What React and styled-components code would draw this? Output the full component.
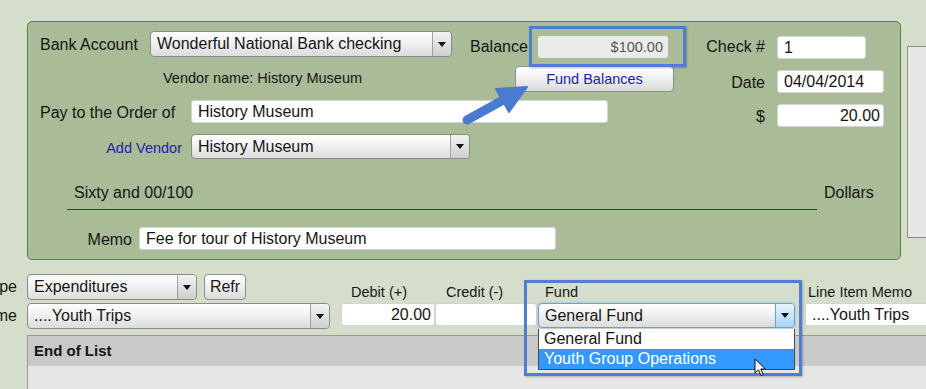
import React from 'react';
import styled, { createGlobalStyle } from 'styled-components';

const GlobalStyle = createGlobalStyle`
  html, body {
    margin: 0;
    padding: 0;
  }
  body {
    background: #d5decb;
    font-family: "Liberation Sans", Arial, sans-serif;
    color: #151515;
    overflow: hidden;
  }
`;

const Page = styled.div`
  width: 926px;
  height: 389px;
  overflow: hidden;
  box-sizing: border-box;
  padding-top: 21px;
`;

const TopSection = styled.div`
  display: flex;
  align-items: flex-start;
  margin-left: 27px;
`;

const Panel = styled.div`
  position: relative;
  flex-shrink: 0;
  box-sizing: border-box;
  width: 874px;
  height: 239px;
  padding: 9px 16px 0 12px;
  background: #a9bb97;
  border: 1px solid #5e8238;
  border-radius: 5px;
`;

const SideBox = styled.div`
  flex-shrink: 0;
  box-sizing: border-box;
  width: 60px;
  height: 192px;
  margin: 25px 0 0 6px;
  background: #e7e7e7;
  border: 1px solid #8c8c8c;
`;

const Row = styled.div`
  display: flex;
  align-items: flex-start;
  height: ${p => p.$h}px;
`;

const Label = styled.div`
  flex-shrink: 0;
  box-sizing: border-box;
  width: ${p => p.$w}px;
  margin-top: ${p => p.$top || 0}px;
  margin-left: ${p => p.$ml || 0}px;
  padding-right: ${p => p.$pr || 0}px;
  font-size: ${p => p.$size || 16}px;
  line-height: ${p => p.$lh || 26}px;
  text-align: ${p => p.$align || 'left'};
  color: ${p => (p.$link ? '#2323a6' : 'inherit')};
  white-space: nowrap;
`;

const Field = styled.div`
  flex-shrink: 0;
  box-sizing: border-box;
  width: ${p => p.$w}px;
  height: ${p => p.$h || 23}px;
  margin-top: ${p => p.$top || 0}px;
  padding: 0 ${p => p.$pr || 6}px 0 6px;
  background: #fff;
  border: 1px solid #d4d4d4;
  border-radius: 3px;
  font-size: 16px;
  line-height: ${p => (p.$h || 23) - 2}px;
  text-align: ${p => p.$align || 'left'};
  white-space: nowrap;
  overflow: hidden;
`;

const Highlight = styled.div`
  position: relative;
  flex-shrink: 0;
  margin-top: ${p => p.$top || 0}px;

  &::after {
    content: '';
    position: absolute;
    top: -10px;
    right: -18px;
    bottom: -9px;
    left: -9px;
    border: 3px solid #4f7ed0;
    box-shadow: 1px 1px 2px rgba(0, 0, 0, 0.25);
    pointer-events: none;
  }
`;

const BalanceField = styled.div`
  box-sizing: border-box;
  width: 130px;
  height: 22px;
  padding-right: 5px;
  background: #ebebeb;
  border-radius: 3px;
  font-size: 14.5px;
  line-height: 22px;
  text-align: right;
  color: #555;
`;

const Button = styled.div`
  flex-shrink: 0;
  box-sizing: border-box;
  width: ${p => p.$w}px;
  height: 26px;
  border: 1px solid #8d8d8d;
  border-radius: 4px;
  background: linear-gradient(#ffffff, #f1f1f1 45%, #dadada);
  font-size: ${p => p.$size || 16}px;
  line-height: 24px;
  text-align: center;
  color: ${p => (p.$link ? '#2323a6' : '#1c1c1c')};
  white-space: nowrap;
`;

const SelectBox = styled.div`
  flex-shrink: 0;
  display: flex;
  box-sizing: border-box;
  width: ${p => p.$w}px;
  height: ${p => p.$h}px;
  border: 1px solid ${p => (p.$focus ? '#6b9ede' : '#8b8b8b')};
  border-radius: 4px;
  background: linear-gradient(#ffffff, #f3f3f3 40%, #dcdcdc);
  box-shadow: ${p => (p.$focus ? '0 0 3px #8ab8f0' : 'none')};
  overflow: hidden;
`;

const SelectText = styled.span`
  flex: 1;
  padding-left: 6px;
  font-size: 16px;
  line-height: ${p => p.$h - 2}px;
  white-space: nowrap;
  overflow: hidden;
`;

const SelectArrow = styled.span`
  flex-shrink: 0;
  display: flex;
  align-items: center;
  justify-content: center;
  width: 18px;
  border-left: 1px solid ${p => (p.$focus ? '#6b9ede' : '#a0a0a0')};
  border-radius: 0 3px 3px 0;
  background: ${p =>
    p.$focus
      ? 'linear-gradient(#e8f5fd, #a8d3f3)'
      : 'linear-gradient(#f3f3f3, #cfcfcf)'};

  &::after {
    content: '';
    border-left: 4px solid transparent;
    border-right: 4px solid transparent;
    border-top: 5px solid #111;
  }
`;

const Select = ({ w, h = 26, focus, children }) => (
  <SelectBox $w={w} $h={h} $focus={focus}>
    <SelectText $h={h}>{children}</SelectText>
    <SelectArrow $focus={focus} />
  </SelectBox>
);

const AmountRow = styled.div`
  display: flex;
  align-items: flex-end;
  margin-top: 25px;
`;

const AmountLine = styled.div`
  box-sizing: border-box;
  width: 750px;
  margin-left: 27px;
  padding: 0 0 7px 7px;
  border-bottom: 1px solid #1f3d70;
  font-size: 16px;
  line-height: 18px;
`;

const Dollars = styled.div`
  margin-left: 7px;
  padding-bottom: 8px;
  font-size: 16px;
  line-height: 18px;
`;

const MemoRow = styled(Row)`
  margin-top: 17px;
`;

const Arrow = styled.svg`
  position: absolute;
  left: 402px;
  top: 38px;
  pointer-events: none;
`;

const Lower = styled.div`
  display: flex;
  align-items: flex-start;
  margin-top: 14px;
`;

const LeftBlock = styled.div`
  flex-shrink: 0;
  display: grid;
  grid-template-columns: 17px 303px;
  column-gap: 10px;
  row-gap: 3px;
`;

const RowLabel = styled.div`
  display: flex;
  justify-content: flex-end;
  overflow: hidden;
  white-space: nowrap;
  font-size: 16px;
  line-height: 26px;
`;

const InlineGroup = styled.div`
  display: flex;
  gap: 7px;
`;

const Column = styled.div`
  position: relative;
  flex-shrink: 0;
  width: ${p => p.$w}px;
  margin-left: ${p => p.$ml || 0}px;

  ${p =>
    p.$highlight &&
    `
    &::after {
      content: '';
      position: absolute;
      top: 6px;
      right: -7px;
      bottom: -48px;
      left: -14px;
      border: 3px solid #4f7ed0;
      box-shadow: 1px 1px 2px rgba(0, 0, 0, 0.25);
      pointer-events: none;
    }
  `}
`;

const ColHead = styled.div`
  box-sizing: border-box;
  height: 29px;
  padding: 9px 0 0 ${p => p.$pl || 0}px;
  font-size: 14.5px;
  line-height: 18px;
  white-space: nowrap;
`;

const DropList = styled.div`
  position: absolute;
  top: 55px;
  left: 0;
  z-index: 2;
  box-sizing: border-box;
  width: 257px;
  background: #fff;
  border: 1px solid #4a4a4a;
  border-top: none;
`;

const DropItem = styled.div`
  height: 20px;
  padding-left: 5px;
  font-size: 16px;
  line-height: 20px;
  white-space: nowrap;
  background: ${p => (p.$selected ? '#3399ff' : 'transparent')};
  color: ${p => (p.$selected ? '#fff' : '#151515')};
`;

const Cursor = styled.svg`
  position: absolute;
  left: 215px;
  top: 29px;
  z-index: 3;
`;

const ListBox = styled.div`
  margin: 6px 0 0 27px;
  border-top: 1px solid #9a9a9a;
  border-left: 1px solid #9a9a9a;
`;

const ListHeader = styled.div`
  height: 30px;
  padding-left: 6px;
  background: #c9c9c9;
  font-size: 15px;
  font-weight: bold;
  line-height: 30px;
`;

const ListBody = styled.div`
  height: 40px;
  background: #e6e6e6;
`;

export default function App() {
  return (
    <>
      <GlobalStyle />
      <Page>
        <TopSection>
          <Panel>
            <Row $h={35}>
              <Label $w={110} $top={1}>Bank Account</Label>
              <Select w={302}>Wonderful National Bank checking</Select>
              <Label $w={68} $ml={18} $top={3}>Balance</Label>
              <Highlight $top={5}>
                <BalanceField>$100.00</BalanceField>
              </Highlight>
              <Label $w={109} $pr={12} $align="right" $top={3}>Check #</Label>
              <Field $w={89} $top={5}>1</Field>
            </Row>
            <Row $h={34}>
              <Label $w={352} $ml={123} $size={14.5} $lh={24}>Vendor name: History Museum</Label>
              <Button $w={159} $size={14.5} $link>Fund Balances</Button>
              <Label $w={103} $pr={12} $align="right" $top={4}>Date</Label>
              <Field $w={107} $top={4}>04/04/2014</Field>
            </Row>
            <Row $h={34}>
              <Label $w={151}>Pay to the Order of</Label>
              <Field $w={417}>History Museum</Field>
              <Label $w={169} $pr={12} $align="right" $top={4}>$</Label>
              <Field $w={107} $top={4} $align="right" $pr={3}>20.00</Field>
            </Row>
            <Row $h={25}>
              <Label $w={151} $pr={9} $align="right" $size={14.5} $link $top={1}>Add Vendor</Label>
              <Select w={279} h={25}>History Museum</Select>
            </Row>
            <AmountRow>
              <AmountLine>Sixty and 00/100</AmountLine>
              <Dollars>Dollars</Dollars>
            </AmountRow>
            <MemoRow $h={23}>
              <Label $w={99} $pr={7} $align="right" $lh={23} $top={1}>Memo</Label>
              <Field $w={417}>Fee for tour of History Museum</Field>
            </MemoRow>
            <Arrow width="110" height="70" viewBox="0 0 110 70">
              <line x1="37" y1="60" x2="75" y2="39" stroke="#4a7bd0" strokeWidth="9" strokeLinecap="round" />
              <polygon points="97,27 66,29 79,52" fill="#4a7bd0" stroke="#4a7bd0" strokeWidth="2" strokeLinejoin="round" />
            </Arrow>
          </Panel>
          <SideBox />
        </TopSection>

        <Lower>
          <LeftBlock>
            <RowLabel>Type</RowLabel>
            <InlineGroup>
              <Select w={170}>Expenditures</Select>
              <Button $w={42}>Refr</Button>
            </InlineGroup>
            <RowLabel>Name</RowLabel>
            <Select w={303}>....Youth Trips</Select>
          </LeftBlock>
          <Column $w={94} $ml={11}>
            <ColHead $pl={10}>Debit (+)</ColHead>
            <Field $w={94} $align="right" $pr={3}>20.00</Field>
          </Column>
          <Column $w={102}>
            <ColHead $pl={11}>Credit (-)</ColHead>
            <Field $w={102} />
          </Column>
          <Column $w={257} $ml={1} $highlight>
            <ColHead $pl={7}>Fund</ColHead>
            <Select w={257} h={25} focus>General Fund</Select>
            <DropList>
              <DropItem>General Fund</DropItem>
              <DropItem $selected>Youth Group Operations</DropItem>
              <Cursor width="13" height="20" viewBox="0 0 13 20">
                <path d="M1 1 L1 15 L4.5 11.8 L7 17.5 L9.2 16.5 L6.8 11 L11.5 11 Z" fill="#fff" stroke="#111" strokeWidth="1" strokeLinejoin="round" />
              </Cursor>
            </DropList>
          </Column>
          <Column $w={200} $ml={10}>
            <ColHead $pl={3}>Line Item Memo</ColHead>
            <Field $w={200}>....Youth Trips</Field>
          </Column>
        </Lower>

        <ListBox>
          <ListHeader>End of List</ListHeader>
          <ListBody />
        </ListBox>
      </Page>
    </>
  );
}
